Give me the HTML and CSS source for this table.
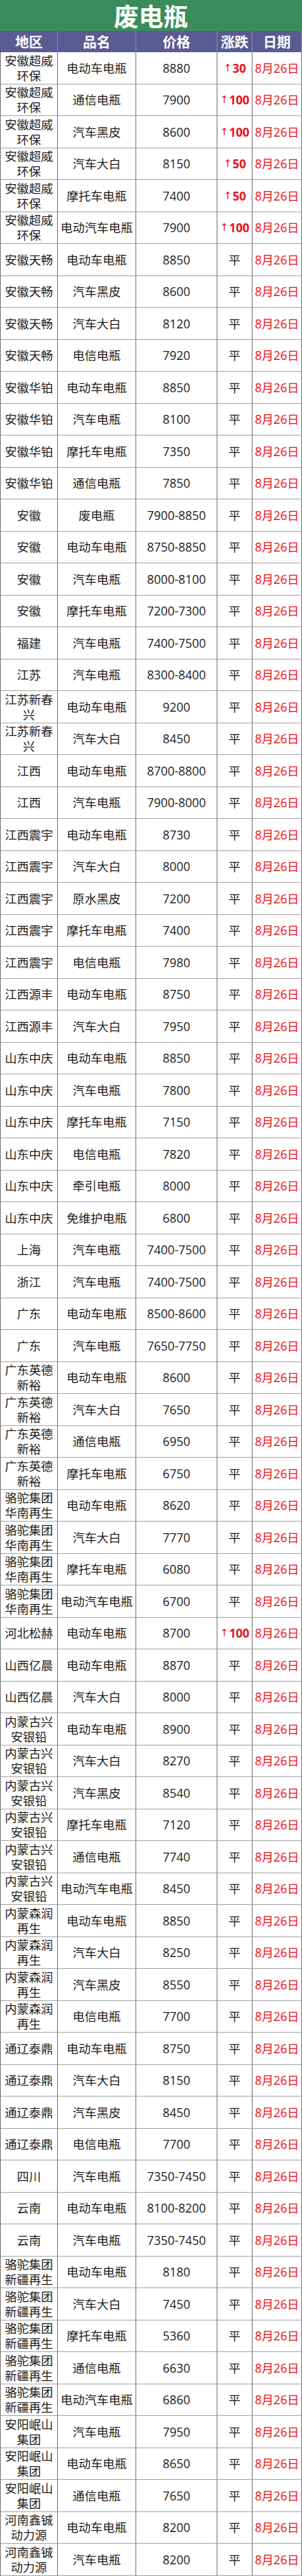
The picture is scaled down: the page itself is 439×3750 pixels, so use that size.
FILE: index.html
```html
<!DOCTYPE html>
<html lang="zh-CN">
<head>
<meta charset="utf-8">
<title>废电瓶</title>
<link rel="stylesheet" href="styles.css">
</head>
<body>
<div class="sheet">
  <div class="title">废电瓶</div>
  <div class="row head"><div class="c">地区</div><div class="c">品名</div><div class="c">价格</div><div class="c">涨跌</div><div class="c">日期</div></div>

  <div class="row"><div class="c">安徽超威环保</div><div class="c">电动车电瓶</div><div class="c">8880</div><div class="c up"><span class="arr">↑</span>30</div><div class="c d">8月26日</div></div>
  <div class="row"><div class="c">安徽超威环保</div><div class="c">通信电瓶</div><div class="c">7900</div><div class="c up"><span class="arr">↑</span>100</div><div class="c d">8月26日</div></div>
  <div class="row"><div class="c">安徽超威环保</div><div class="c">汽车黑皮</div><div class="c">8600</div><div class="c up"><span class="arr">↑</span>100</div><div class="c d">8月26日</div></div>
  <div class="row"><div class="c">安徽超威环保</div><div class="c">汽车大白</div><div class="c">8150</div><div class="c up"><span class="arr">↑</span>50</div><div class="c d">8月26日</div></div>
  <div class="row"><div class="c">安徽超威环保</div><div class="c">摩托车电瓶</div><div class="c">7400</div><div class="c up"><span class="arr">↑</span>50</div><div class="c d">8月26日</div></div>
  <div class="row"><div class="c">安徽超威环保</div><div class="c">电动汽车电瓶</div><div class="c">7900</div><div class="c up"><span class="arr">↑</span>100</div><div class="c d">8月26日</div></div>
  <div class="row"><div class="c">安徽天畅</div><div class="c">电动车电瓶</div><div class="c">8850</div><div class="c">平</div><div class="c d">8月26日</div></div>
  <div class="row"><div class="c">安徽天畅</div><div class="c">汽车黑皮</div><div class="c">8600</div><div class="c">平</div><div class="c d">8月26日</div></div>
  <div class="row"><div class="c">安徽天畅</div><div class="c">汽车大白</div><div class="c">8120</div><div class="c">平</div><div class="c d">8月26日</div></div>
  <div class="row"><div class="c">安徽天畅</div><div class="c">电信电瓶</div><div class="c">7920</div><div class="c">平</div><div class="c d">8月26日</div></div>
  <div class="row"><div class="c">安徽华铂</div><div class="c">电动车电瓶</div><div class="c">8850</div><div class="c">平</div><div class="c d">8月26日</div></div>
  <div class="row"><div class="c">安徽华铂</div><div class="c">汽车电瓶</div><div class="c">8100</div><div class="c">平</div><div class="c d">8月26日</div></div>
  <div class="row"><div class="c">安徽华铂</div><div class="c">摩托车电瓶</div><div class="c">7350</div><div class="c">平</div><div class="c d">8月26日</div></div>
  <div class="row"><div class="c">安徽华铂</div><div class="c">通信电瓶</div><div class="c">7850</div><div class="c">平</div><div class="c d">8月26日</div></div>
  <div class="row"><div class="c">安徽</div><div class="c">废电瓶</div><div class="c">7900-8850</div><div class="c">平</div><div class="c d">8月26日</div></div>
  <div class="row"><div class="c">安徽</div><div class="c">电动车电瓶</div><div class="c">8750-8850</div><div class="c">平</div><div class="c d">8月26日</div></div>
  <div class="row"><div class="c">安徽</div><div class="c">汽车电瓶</div><div class="c">8000-8100</div><div class="c">平</div><div class="c d">8月26日</div></div>
  <div class="row"><div class="c">安徽</div><div class="c">摩托车电瓶</div><div class="c">7200-7300</div><div class="c">平</div><div class="c d">8月26日</div></div>
  <div class="row"><div class="c">福建</div><div class="c">汽车电瓶</div><div class="c">7400-7500</div><div class="c">平</div><div class="c d">8月26日</div></div>
  <div class="row"><div class="c">江苏</div><div class="c">汽车电瓶</div><div class="c">8300-8400</div><div class="c">平</div><div class="c d">8月26日</div></div>
  <div class="row"><div class="c">江苏新春兴</div><div class="c">电动车电瓶</div><div class="c">9200</div><div class="c">平</div><div class="c d">8月26日</div></div>
  <div class="row"><div class="c">江苏新春兴</div><div class="c">汽车大白</div><div class="c">8450</div><div class="c">平</div><div class="c d">8月26日</div></div>
  <div class="row"><div class="c">江西</div><div class="c">电动车电瓶</div><div class="c">8700-8800</div><div class="c">平</div><div class="c d">8月26日</div></div>
  <div class="row"><div class="c">江西</div><div class="c">汽车电瓶</div><div class="c">7900-8000</div><div class="c">平</div><div class="c d">8月26日</div></div>
  <div class="row"><div class="c">江西震宇</div><div class="c">电动车电瓶</div><div class="c">8730</div><div class="c">平</div><div class="c d">8月26日</div></div>
  <div class="row"><div class="c">江西震宇</div><div class="c">汽车大白</div><div class="c">8000</div><div class="c">平</div><div class="c d">8月26日</div></div>
  <div class="row"><div class="c">江西震宇</div><div class="c">原水黑皮</div><div class="c">7200</div><div class="c">平</div><div class="c d">8月26日</div></div>
  <div class="row"><div class="c">江西震宇</div><div class="c">摩托车电瓶</div><div class="c">7400</div><div class="c">平</div><div class="c d">8月26日</div></div>
  <div class="row"><div class="c">江西震宇</div><div class="c">电信电瓶</div><div class="c">7980</div><div class="c">平</div><div class="c d">8月26日</div></div>
  <div class="row"><div class="c">江西源丰</div><div class="c">电动车电瓶</div><div class="c">8750</div><div class="c">平</div><div class="c d">8月26日</div></div>
  <div class="row"><div class="c">江西源丰</div><div class="c">汽车大白</div><div class="c">7950</div><div class="c">平</div><div class="c d">8月26日</div></div>
  <div class="row"><div class="c">山东中庆</div><div class="c">电动车电瓶</div><div class="c">8850</div><div class="c">平</div><div class="c d">8月26日</div></div>
  <div class="row"><div class="c">山东中庆</div><div class="c">汽车电瓶</div><div class="c">7800</div><div class="c">平</div><div class="c d">8月26日</div></div>
  <div class="row"><div class="c">山东中庆</div><div class="c">摩托车电瓶</div><div class="c">7150</div><div class="c">平</div><div class="c d">8月26日</div></div>
  <div class="row"><div class="c">山东中庆</div><div class="c">电信电瓶</div><div class="c">7820</div><div class="c">平</div><div class="c d">8月26日</div></div>
  <div class="row"><div class="c">山东中庆</div><div class="c">牵引电瓶</div><div class="c">8000</div><div class="c">平</div><div class="c d">8月26日</div></div>
  <div class="row"><div class="c">山东中庆</div><div class="c">免维护电瓶</div><div class="c">6800</div><div class="c">平</div><div class="c d">8月26日</div></div>
  <div class="row"><div class="c">上海</div><div class="c">汽车电瓶</div><div class="c">7400-7500</div><div class="c">平</div><div class="c d">8月26日</div></div>
  <div class="row"><div class="c">浙江</div><div class="c">汽车电瓶</div><div class="c">7400-7500</div><div class="c">平</div><div class="c d">8月26日</div></div>
  <div class="row"><div class="c">广东</div><div class="c">电动车电瓶</div><div class="c">8500-8600</div><div class="c">平</div><div class="c d">8月26日</div></div>
  <div class="row"><div class="c">广东</div><div class="c">汽车电瓶</div><div class="c">7650-7750</div><div class="c">平</div><div class="c d">8月26日</div></div>
  <div class="row"><div class="c">广东英德新裕</div><div class="c">电动车电瓶</div><div class="c">8600</div><div class="c">平</div><div class="c d">8月26日</div></div>
  <div class="row"><div class="c">广东英德新裕</div><div class="c">汽车大白</div><div class="c">7650</div><div class="c">平</div><div class="c d">8月26日</div></div>
  <div class="row"><div class="c">广东英德新裕</div><div class="c">通信电瓶</div><div class="c">6950</div><div class="c">平</div><div class="c d">8月26日</div></div>
  <div class="row"><div class="c">广东英德新裕</div><div class="c">摩托车电瓶</div><div class="c">6750</div><div class="c">平</div><div class="c d">8月26日</div></div>
  <div class="row"><div class="c">骆驼集团华南再生</div><div class="c">电动车电瓶</div><div class="c">8620</div><div class="c">平</div><div class="c d">8月26日</div></div>
  <div class="row"><div class="c">骆驼集团华南再生</div><div class="c">汽车大白</div><div class="c">7770</div><div class="c">平</div><div class="c d">8月26日</div></div>
  <div class="row"><div class="c">骆驼集团华南再生</div><div class="c">摩托车电瓶</div><div class="c">6080</div><div class="c">平</div><div class="c d">8月26日</div></div>
  <div class="row"><div class="c">骆驼集团华南再生</div><div class="c">电动汽车电瓶</div><div class="c">6700</div><div class="c">平</div><div class="c d">8月26日</div></div>
  <div class="row"><div class="c">河北松赫</div><div class="c">电动车电瓶</div><div class="c">8700</div><div class="c up"><span class="arr">↑</span>100</div><div class="c d">8月26日</div></div>
  <div class="row"><div class="c">山西亿晨</div><div class="c">电动车电瓶</div><div class="c">8870</div><div class="c">平</div><div class="c d">8月26日</div></div>
  <div class="row"><div class="c">山西亿晨</div><div class="c">汽车大白</div><div class="c">8000</div><div class="c">平</div><div class="c d">8月26日</div></div>
  <div class="row"><div class="c">内蒙古兴安银铅</div><div class="c">电动车电瓶</div><div class="c">8900</div><div class="c">平</div><div class="c d">8月26日</div></div>
  <div class="row"><div class="c">内蒙古兴安银铅</div><div class="c">汽车大白</div><div class="c">8270</div><div class="c">平</div><div class="c d">8月26日</div></div>
  <div class="row"><div class="c">内蒙古兴安银铅</div><div class="c">汽车黑皮</div><div class="c">8540</div><div class="c">平</div><div class="c d">8月26日</div></div>
  <div class="row"><div class="c">内蒙古兴安银铅</div><div class="c">摩托车电瓶</div><div class="c">7120</div><div class="c">平</div><div class="c d">8月26日</div></div>
  <div class="row"><div class="c">内蒙古兴安银铅</div><div class="c">通信电瓶</div><div class="c">7740</div><div class="c">平</div><div class="c d">8月26日</div></div>
  <div class="row"><div class="c">内蒙古兴安银铅</div><div class="c">电动汽车电瓶</div><div class="c">8450</div><div class="c">平</div><div class="c d">8月26日</div></div>
  <div class="row"><div class="c">内蒙森润再生</div><div class="c">电动车电瓶</div><div class="c">8850</div><div class="c">平</div><div class="c d">8月26日</div></div>
  <div class="row"><div class="c">内蒙森润再生</div><div class="c">汽车大白</div><div class="c">8250</div><div class="c">平</div><div class="c d">8月26日</div></div>
  <div class="row"><div class="c">内蒙森润再生</div><div class="c">汽车黑皮</div><div class="c">8550</div><div class="c">平</div><div class="c d">8月26日</div></div>
  <div class="row"><div class="c">内蒙森润再生</div><div class="c">电信电瓶</div><div class="c">7700</div><div class="c">平</div><div class="c d">8月26日</div></div>
  <div class="row"><div class="c">通辽泰鼎</div><div class="c">电动车电瓶</div><div class="c">8750</div><div class="c">平</div><div class="c d">8月26日</div></div>
  <div class="row"><div class="c">通辽泰鼎</div><div class="c">汽车大白</div><div class="c">8150</div><div class="c">平</div><div class="c d">8月26日</div></div>
  <div class="row"><div class="c">通辽泰鼎</div><div class="c">汽车黑皮</div><div class="c">8450</div><div class="c">平</div><div class="c d">8月26日</div></div>
  <div class="row"><div class="c">通辽泰鼎</div><div class="c">电信电瓶</div><div class="c">7700</div><div class="c">平</div><div class="c d">8月26日</div></div>
  <div class="row"><div class="c">四川</div><div class="c">汽车电瓶</div><div class="c">7350-7450</div><div class="c">平</div><div class="c d">8月26日</div></div>
  <div class="row"><div class="c">云南</div><div class="c">电动车电瓶</div><div class="c">8100-8200</div><div class="c">平</div><div class="c d">8月26日</div></div>
  <div class="row"><div class="c">云南</div><div class="c">汽车电瓶</div><div class="c">7350-7450</div><div class="c">平</div><div class="c d">8月26日</div></div>
  <div class="row"><div class="c">骆驼集团新疆再生</div><div class="c">电动车电瓶</div><div class="c">8180</div><div class="c">平</div><div class="c d">8月26日</div></div>
  <div class="row"><div class="c">骆驼集团新疆再生</div><div class="c">汽车大白</div><div class="c">7450</div><div class="c">平</div><div class="c d">8月26日</div></div>
  <div class="row"><div class="c">骆驼集团新疆再生</div><div class="c">摩托车电瓶</div><div class="c">5360</div><div class="c">平</div><div class="c d">8月26日</div></div>
  <div class="row"><div class="c">骆驼集团新疆再生</div><div class="c">通信电瓶</div><div class="c">6630</div><div class="c">平</div><div class="c d">8月26日</div></div>
  <div class="row"><div class="c">骆驼集团新疆再生</div><div class="c">电动汽车电瓶</div><div class="c">6860</div><div class="c">平</div><div class="c d">8月26日</div></div>
  <div class="row"><div class="c">安阳岷山集团</div><div class="c">汽车电瓶</div><div class="c">7950</div><div class="c">平</div><div class="c d">8月26日</div></div>
  <div class="row"><div class="c">安阳岷山集团</div><div class="c">电动车电瓶</div><div class="c">8650</div><div class="c">平</div><div class="c d">8月26日</div></div>
  <div class="row"><div class="c">安阳岷山集团</div><div class="c">通信电瓶</div><div class="c">7650</div><div class="c">平</div><div class="c d">8月26日</div></div>
  <div class="row"><div class="c">河南鑫铖动力源</div><div class="c">电动车电瓶</div><div class="c">8200</div><div class="c">平</div><div class="c d">8月26日</div></div>
  <div class="row"><div class="c">河南鑫铖动力源</div><div class="c">汽车电瓶</div><div class="c">8200</div><div class="c">平</div><div class="c d">8月26日</div></div>
</div>
</body>
</html>
```

FILE: styles.css
```css
html, body {
  margin: 0;
  padding: 0;
  background: #ffffff;
}

.sheet {
  width: 439px;
  font-family: "Open Sans", "Noto Sans CJK SC", sans-serif;
  color: #1c1c1c;
}

.title {
  height: 45px;
  background: #3a8c5b;
  color: #ffffff;
  font-family: "Noto Sans CJK SC", sans-serif;
  font-weight: 700;
  font-size: 36px;
  line-height: 45px;
  text-align: center;
}

.row {
  display: grid;
  grid-template-columns: 83px 114px 118px 51px 72px;
  height: 46.5px;
  border-left: 1px solid #6e6e6e;
  box-sizing: border-box;
}

.c {
  display: flex;
  align-items: center;
  justify-content: center;
  text-align: center;
  box-sizing: border-box;
  border-right: 1px solid #6e6e6e;
  border-bottom: 1px solid #a3a3a3;
  font-size: 17.5px;
  line-height: 22px;
  overflow: visible;
  white-space: normal;
  word-break: break-all;
}

.row .c:first-child {
  padding: 0 1px;
}

.head {
  height: 31px;
  background: #5b5b93;
  border-left-color: #5b5b93;
}

.head .c {
  color: #ffffff;
  font-family: "Noto Sans CJK SC", sans-serif;
  font-weight: 700;
  font-size: 20px;
  border-right-color: #8a8ab0;
  border-bottom: none;
}

.up {
  color: #e8141c;
  font-weight: 700;
  letter-spacing: -0.3px;
  white-space: nowrap;
}

.arr {
  font-weight: 400;
  font-family: "DejaVu Sans", sans-serif;
  font-size: 15px;
  margin-right: 1px;
}

.d {
  color: #e8141c;
  white-space: nowrap;
  letter-spacing: -0.2px;
}
```
